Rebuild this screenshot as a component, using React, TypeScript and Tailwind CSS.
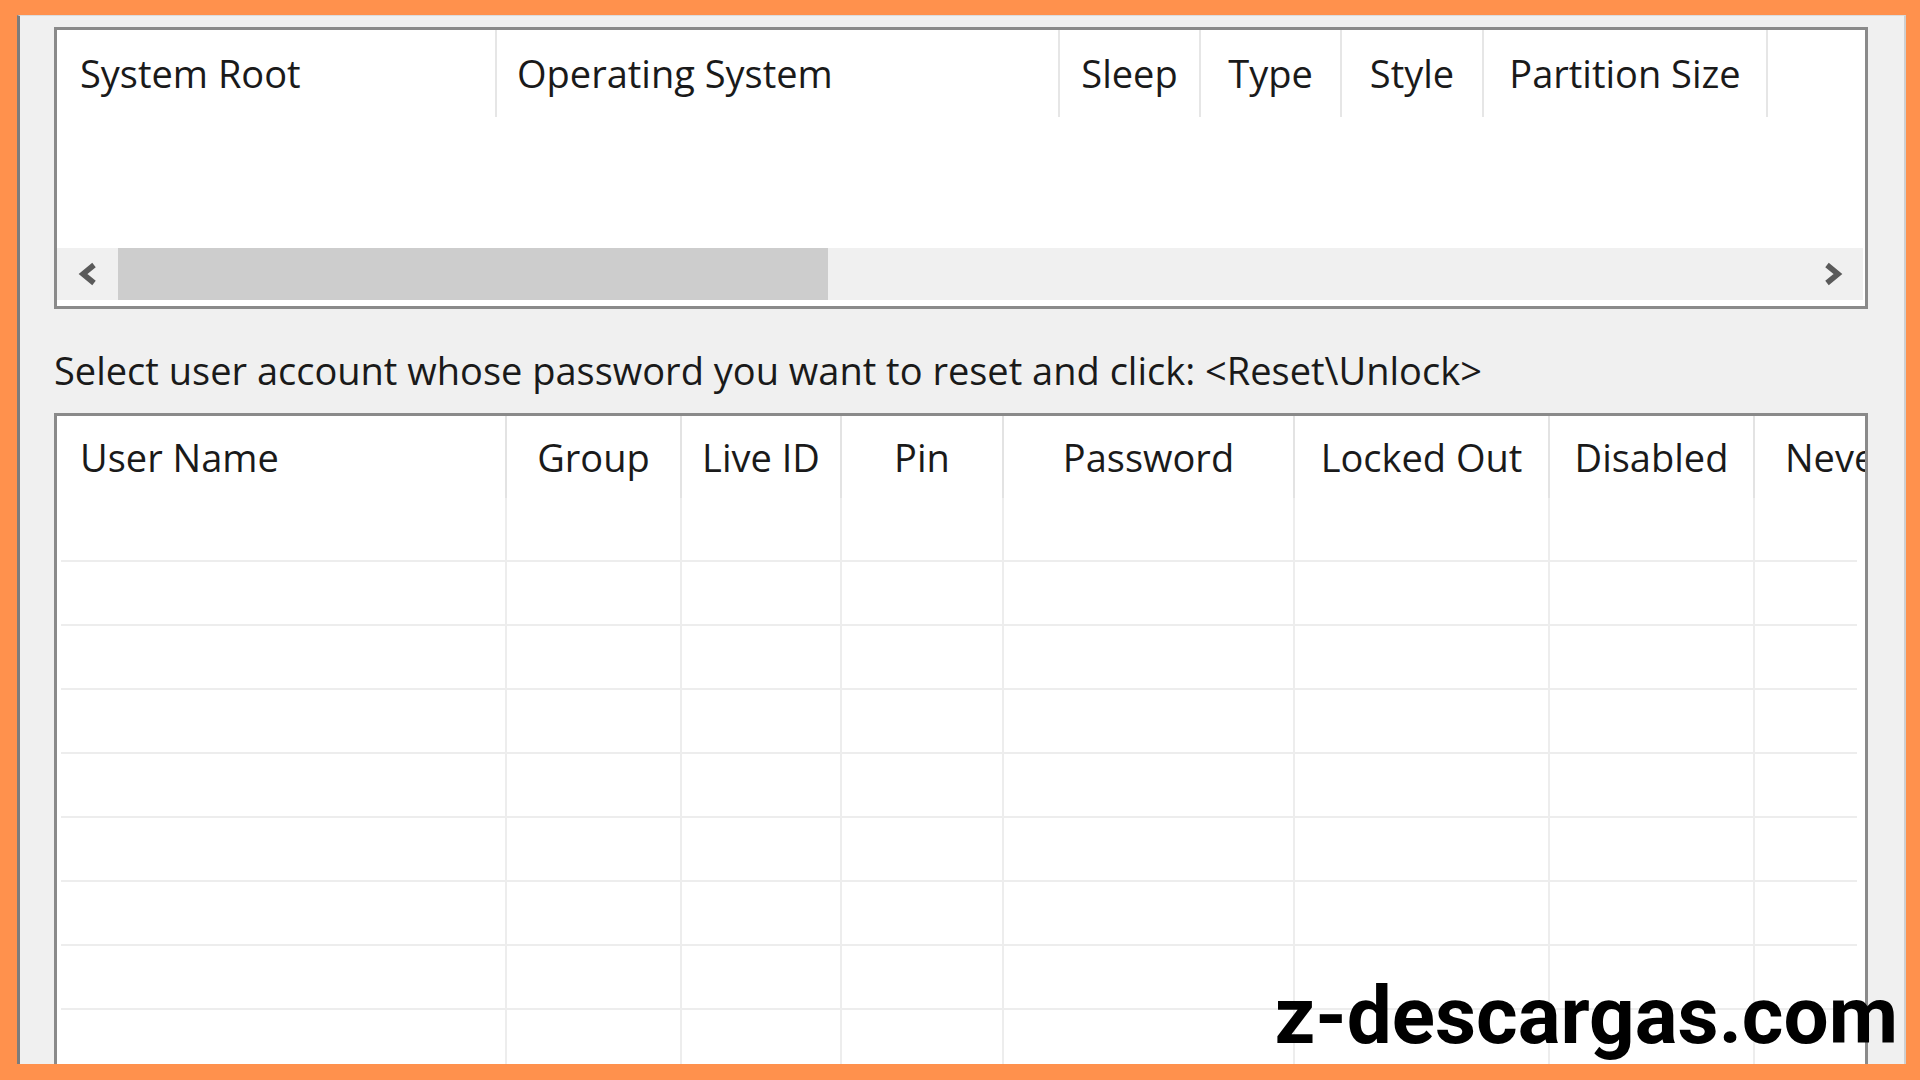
import React from "react";

function Chevron({ dir }: { dir: "left" | "right" }) {
  return (
    <svg width="22" height="24" viewBox="0 0 22 24">
      <polyline
        points={dir === "left" ? "17,3 6,12 17,21" : "5,3 16,12 5,21"}
        fill="none"
        stroke="#5a5a5a"
        strokeWidth="5.5"
        strokeLinejoin="miter"
      />
    </svg>
  );
}

const topCols = [
  { label: "System Root", w: "w-[440px]", align: "justify-start pl-[23px]" },
  { label: "Operating System", w: "w-[563px]", align: "justify-start pl-[20px]" },
  { label: "Sleep", w: "w-[141px]", align: "justify-center" },
  { label: "Type", w: "w-[141px]", align: "justify-center" },
  { label: "Style", w: "w-[142px]", align: "justify-center" },
  { label: "Partition Size", w: "w-[284px]", align: "justify-center" },
];

const userCols = [
  { label: "User Name", w: "w-[450px]", align: "justify-start pl-[23px]" },
  { label: "Group", w: "w-[175px]", align: "justify-center" },
  { label: "Live ID", w: "w-[160px]", align: "justify-center" },
  { label: "Pin", w: "w-[162px]", align: "justify-center" },
  { label: "Password", w: "w-[291px]", align: "justify-center" },
  { label: "Locked Out", w: "w-[255px]", align: "justify-center" },
  { label: "Disabled", w: "w-[205px]", align: "justify-center" },
];

const rowWidths = ["w-[446px]", "w-[175px]", "w-[160px]", "w-[162px]", "w-[291px]", "w-[255px]", "w-[205px]"];

export default function App() {
  const rows = Array.from({ length: 9 });
  return (
    <div className="relative w-[1920px] h-[1080px] overflow-hidden bg-[#ff914d] pt-[15px] pl-[17px] pr-[14px] pb-[16px] font-['Open_Sans','Noto_Sans',sans-serif] text-[#1a1a1a]">
      <div className="flex h-full w-full flex-col overflow-hidden border-l-[3px] border-t border-r-[2px] border-l-[#7c7c7c] border-t-[#dcdcdc] border-r-[#cfcfcf] bg-[#f0f0f0] pl-[34px] pr-[36px] pt-[11px]">
        {/* Top list view */}
        <div className="flex h-[282px] shrink-0 flex-col border-[3px] border-[#8a8a8a] bg-white">
          <div className="flex h-[87px] shrink-0">
            {topCols.map((c) => (
              <div
                key={c.label}
                className={`flex ${c.w} shrink-0 items-center border-r-2 border-[#e6e6e6] ${c.align} whitespace-nowrap text-[38px]`}
              >
                {c.label}
              </div>
            ))}
            <div className="flex-1" />
          </div>
          <div className="flex-1" />
          <div className="mr-[2px] flex h-[52px] shrink-0 bg-[#f0f0f0]">
            <div className="flex w-[61px] items-center justify-center">
              <Chevron dir="left" />
            </div>
            <div className="w-[710px] bg-[#cdcdcd]" />
            <div className="flex-1" />
            <div className="flex w-[61px] items-center justify-center">
              <Chevron dir="right" />
            </div>
          </div>
          <div className="h-[6px] shrink-0" />
        </div>

        {/* Label */}
        <div className="mt-[36px] h-[51px] shrink-0 whitespace-nowrap text-[38px] leading-[51px]">
          {"Select user account whose password you want to reset and click: <Reset\\Unlock>"}
        </div>

        {/* User list view */}
        <div className="mt-[17px] flex h-[720px] shrink-0 flex-col border-[3px] border-b-0 border-[#8a8a8a] bg-white">
          <div className="flex h-[82px] shrink-0">
            {userCols.map((c) => (
              <div
                key={c.label}
                className={`flex ${c.w} shrink-0 items-center border-r-2 border-[#e3e3e3] ${c.align} whitespace-nowrap text-[38px]`}
              >
                {c.label}
              </div>
            ))}
            <div className="flex flex-1 items-center overflow-hidden whitespace-nowrap pl-[30px] text-[38px]">
              Never Expires
            </div>
          </div>
          {rows.map((_, i) => (
            <div key={i} className="ml-[4px] mr-[8px] flex h-[64px] shrink-0 border-b-2 border-[#ededed]">
              {rowWidths.map((w, j) => (
                <div key={j} className={`${w} shrink-0 border-r-2 border-[#ededed]`} />
              ))}
              <div className="flex-1" />
            </div>
          ))}
        </div>
      </div>

      {/* Watermark */}
      <div className="absolute right-[22px] top-[976px] whitespace-nowrap font-['Roboto',sans-serif] text-[80px] font-bold leading-none text-black">
        z-descargas.com
      </div>
    </div>
  );
}
